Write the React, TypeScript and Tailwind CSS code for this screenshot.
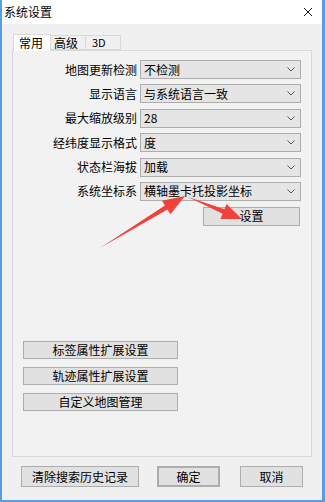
import React from 'react';

const font = { fontFamily: '"Microsoft YaHei", "Noto Sans CJK SC", "Noto Sans", sans-serif' };

const rows: { label: string; value: string }[] = [
  { label: '地图更新检测', value: '不检测' },
  { label: '显示语言', value: '与系统语言一致' },
  { label: '最大缩放级别', value: '28' },
  { label: '经纬度显示格式', value: '度' },
  { label: '状态栏海拔', value: '加载' },
  { label: '系统坐标系', value: '横轴墨卡托投影坐标' },
];

const Chevron = () => (
  <svg width="8" height="5" viewBox="0 0 8 5" className="shrink-0">
    <path d="M0.5 0.5 L4 4 L7.5 0.5" fill="none" stroke="#555" strokeWidth="1" />
  </svg>
);

const Select = ({ value }: { value: string }) => (
  <div className="flex items-center justify-between w-[161px] h-[19px] bg-[#e5e5e5] border border-[#adadad] pl-[3px] pr-[5px]">
    <span className="text-[12px] leading-none text-black whitespace-nowrap">{value}</span>
    <Chevron />
  </div>
);

const Btn = ({ children, className = '' }: { children: React.ReactNode; className?: string }) => (
  <div className={`flex items-center justify-center bg-[#e1e1e1] border border-[#adadad] text-[12px] leading-none text-black ${className}`}>
    {children}
  </div>
);

export default function App() {
  return (
    <div className="relative w-[325px] h-[502px] bg-[#f0f0f0] border-l-2 border-r-[3px] border-b-2 border-[#5a9ee0] flex flex-col" style={font}>
      {/* Title bar */}
      <div className="h-[24px] bg-white flex items-center justify-between pl-[2px] pr-[9px] shrink-0">
        <span className="text-[12px] leading-none text-black">系统设置</span>
        <svg width="10" height="10" viewBox="0 0 10 10">
          <path d="M1 1 L9 9 M9 1 L1 9" stroke="#111" strokeWidth="1" />
        </svg>
      </div>

      {/* Tabs */}
      <div className="flex items-end h-[17px] mt-[10px] ml-[11px] relative z-10">
        <div className="w-[38px] h-[17px] bg-white border border-b-0 border-[#d9d9d9] flex items-center pl-[5px] text-[12px] leading-none text-black">常用</div>
        <div className="w-[35px] h-[15px] mb-[1px] bg-[#f0f0f0] border border-l-0 border-[#d9d9d9] flex items-center pl-[3px] text-[12px] leading-none text-black">高级</div>
        <div className="w-[35px] h-[15px] mb-[1px] bg-[#f0f0f0] border border-l-0 border-[#d9d9d9] flex items-center pl-[6px] text-[11px] leading-none text-black">3D</div>
      </div>

      {/* Panel */}
      <div className="ml-[10px] w-[300px] h-[407px] -mt-[1px] border border-[#d9d9d9] bg-[#f2f2f2] flex flex-col pt-[9px]">
        <div className="flex flex-col gap-[5.4px]">
          {rows.map((r) => (
            <div key={r.label} className="flex items-center h-[19px]">
              <div className="w-[124px] text-right text-[12px] leading-none text-black whitespace-nowrap">{r.label}</div>
              <div className="ml-[3px]">
                <Select value={r.value} />
              </div>
            </div>
          ))}
        </div>
        <Btn className="w-[97px] h-[19px] ml-[190px] mt-[6px]">设置</Btn>

        <div className="flex flex-col gap-[8px] mt-[115px] ml-[10px]">
          <Btn className="w-[155px] h-[18px]">标签属性扩展设置</Btn>
          <Btn className="w-[155px] h-[18px]">轨迹属性扩展设置</Btn>
          <Btn className="w-[155px] h-[18px]">自定义地图管理</Btn>
        </div>
      </div>

      {/* Bottom buttons */}
      <div className="flex items-center mt-[9px] ml-[19px]">
        <Btn className="w-[118px] h-[21px]">清除搜索历史记录</Btn>
        <Btn className="w-[63px] h-[21px] ml-[18px] border-[#0078d7] border-2">确定</Btn>
        <Btn className="w-[63px] h-[21px] ml-[20px]">取消</Btn>
      </div>

      {/* Red annotation arrows */}
      <svg className="absolute left-[-2px] top-0 pointer-events-none" width="325" height="502" viewBox="0 0 325 502">
        <polygon
          points="100,248 167.5,209.6 170.4,214.3 185,196 162,200.7 164.9,205.4"
          fill="#f0413a"
        />
        <polygon
          points="188,197 222.6,213.8 220.5,218.9 242,219 226.5,204.1 224.4,209.2"
          fill="#f0413a"
        />
      </svg>
    </div>
  );
}
